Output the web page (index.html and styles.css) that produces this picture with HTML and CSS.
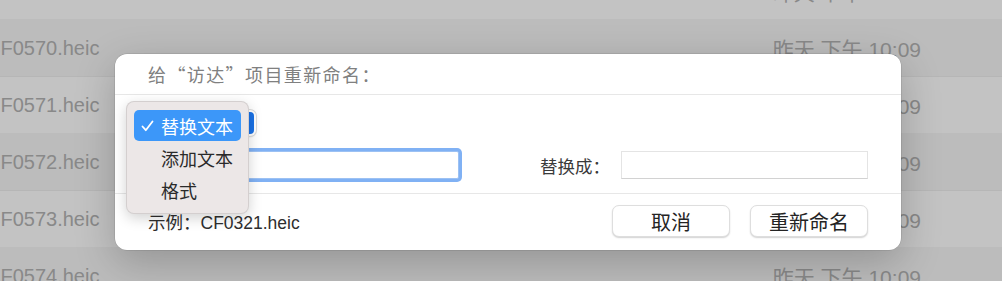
FILE: index.html
```html
<!DOCTYPE html>
<html lang="zh-CN">
<head>
<meta charset="utf-8">
<title>重新命名</title>
<link rel="stylesheet" href="styles.css">
</head>
<body>
<div class="list">
  <div class="row odd"><span class="name">CF0569.heic</span><span class="date">昨天 下午 10:09</span></div>
  <div class="row even"><span class="name">CF0570.heic</span><span class="date">昨天 下午 10:09</span></div>
  <div class="row odd"><span class="name">CF0571.heic</span><span class="date">昨天 下午 10:09</span></div>
  <div class="row even"><span class="name">CF0572.heic</span><span class="date">昨天 下午 10:09</span></div>
  <div class="row odd"><span class="name">CF0573.heic</span><span class="date">昨天 下午 10:09</span></div>
  <div class="row even"><span class="name">CF0574.heic</span><span class="date">昨天 下午 10:09</span></div>
</div>

<div class="dialog">
  <div class="header">给“访达”项目重新命名：</div>
  <div class="content">
    <div class="popup"><span class="popup-arrow"></span></div>
    <div class="fields">
      <div class="field focused"></div>
      <span class="label">替换成：</span>
      <div class="field plain"></div>
    </div>
  </div>
  <div class="footer">
    <span class="example">示例：CF0321.heic</span>
    <div class="buttons">
      <button class="btn">取消</button>
      <button class="btn">重新命名</button>
    </div>
  </div>

  <div class="menu">
    <div class="item selected">
      <svg class="check" width="13" height="12" viewBox="0 0 13 12"><polyline points="1.5,6.5 4.8,10.2 11.5,1.5" fill="none" stroke="#fff" stroke-width="1.8" stroke-linecap="round" stroke-linejoin="round"/></svg>
      <span>替换文本</span>
    </div>
    <div class="item"><span>添加文本</span></div>
    <div class="item"><span>格式</span></div>
  </div>
</div>
</body>
</html>
```

FILE: styles.css
```css
* { box-sizing: border-box; }
html, body {
  margin: 0;
  padding: 0;
  width: 1002px;
  height: 281px;
  overflow: hidden;
  background: #c2c2c2;
  font-family: "Liberation Sans", "Noto Sans CJK SC", sans-serif;
}
.list {
  margin-top: -37px;
  display: flex;
  flex-direction: column;
}
.row {
  height: 57px;
  display: flex;
  align-items: center;
  justify-content: space-between;
  padding-right: 81px;
  border-bottom: 1px solid rgba(0,0,0,0.03);
  color: #898989;
  font-size: 20px;
}
.row.odd { background: #c3c3c3; }
.row.even { background: #bcbcbc; }
.name { margin-left: -14px; }
.date { font-size: 21px; }

.dialog {
  position: absolute;
  left: 115px;
  top: 54px;
  width: 786px;
  height: 196px;
  background: #fff;
  border-radius: 12px;
  box-shadow: 0 12px 40px rgba(0,0,0,0.22), 0 0 0 0.5px rgba(0,0,0,0.15);
  display: flex;
  flex-direction: column;
}
.header {
  height: 41px;
  padding-left: 33px;
  display: flex;
  align-items: center;
  font-family: "Noto Sans CJK SC", sans-serif;
  font-size: 18px;
  line-height: 1;
  color: #808080;
  border-bottom: 1px solid #e7e7e7;
  letter-spacing: 1.4px;
}
.content {
  height: 99px;
  padding: 15px 33px 14px 33px;
  border-bottom: 1px solid #e7e7e7;
  display: flex;
  flex-direction: column;
  gap: 15px;
}
.popup {
  width: 108px;
  height: 26px;
  border-radius: 6px;
  background: #fff;
  box-shadow: 0 0 0 1px #dcdcdc, 0 1px 2px rgba(0,0,0,0.15);
  display: flex;
  justify-content: flex-end;
  padding: 2px;
}
.popup-arrow {
  width: 16px;
  height: 22px;
  border-radius: 4px;
  background: #1b72e6;
}
.fields {
  display: flex;
  align-items: center;
  height: 28px;
}
.field {
  height: 28px;
  background: #fff;
}
.field.focused {
  margin-left: 52px;
  width: 259px;
  border: 1px solid #9cc1f3;
  box-shadow: 0 0 0 3px #80b1f4;
  border-radius: 2px;
}
.label {
  margin-left: 81px;
  width: 81px;
  font-size: 17.5px;
  color: #3a3a3a;
}
.field.plain {
  width: 247px;
  border: 1px solid #e4e4e4;
  border-bottom-color: #d2d2d2;
}
.footer {
  flex: 1;
  display: flex;
  align-items: center;
  justify-content: space-between;
  padding: 0 33px 2px 33px;
}
.example {
  font-size: 17.5px;
  color: #2e2e2e;
}
.buttons {
  display: flex;
  gap: 20px;
}
.btn {
  width: 118px;
  height: 32px;
  border-radius: 7px;
  border: 1px solid #dedede;
  background: #fff;
  box-shadow: 0 1px 1.5px rgba(0,0,0,0.18);
  font-family: "Liberation Sans", "Noto Sans CJK SC", sans-serif;
  font-size: 20px;
  color: #242424;
  padding: 0;
  display: flex;
  align-items: center;
  justify-content: center;
}

.menu {
  position: absolute;
  left: 11px;
  top: 47px;
  width: 123px;
  height: 113px;
  background: #ece7e7;
  border-radius: 8px;
  border: 1px solid rgba(0,0,0,0.1);
  box-shadow: 0 4px 14px rgba(0,0,0,0.18);
  padding: 8px 7px 0 7px;
  display: flex;
  flex-direction: column;
}
.item {
  height: 31px;
  display: flex;
  align-items: center;
  padding-left: 27px;
  font-size: 18px;
  color: #2a2a2a;
  border-radius: 5px;
  position: relative;
}
.item.selected {
  background: #3c97f9;
  color: #fff;
}
.item + .item { margin-top: 1px; }
.check {
  position: absolute;
  left: 7px;
  top: 10px;
}
```
